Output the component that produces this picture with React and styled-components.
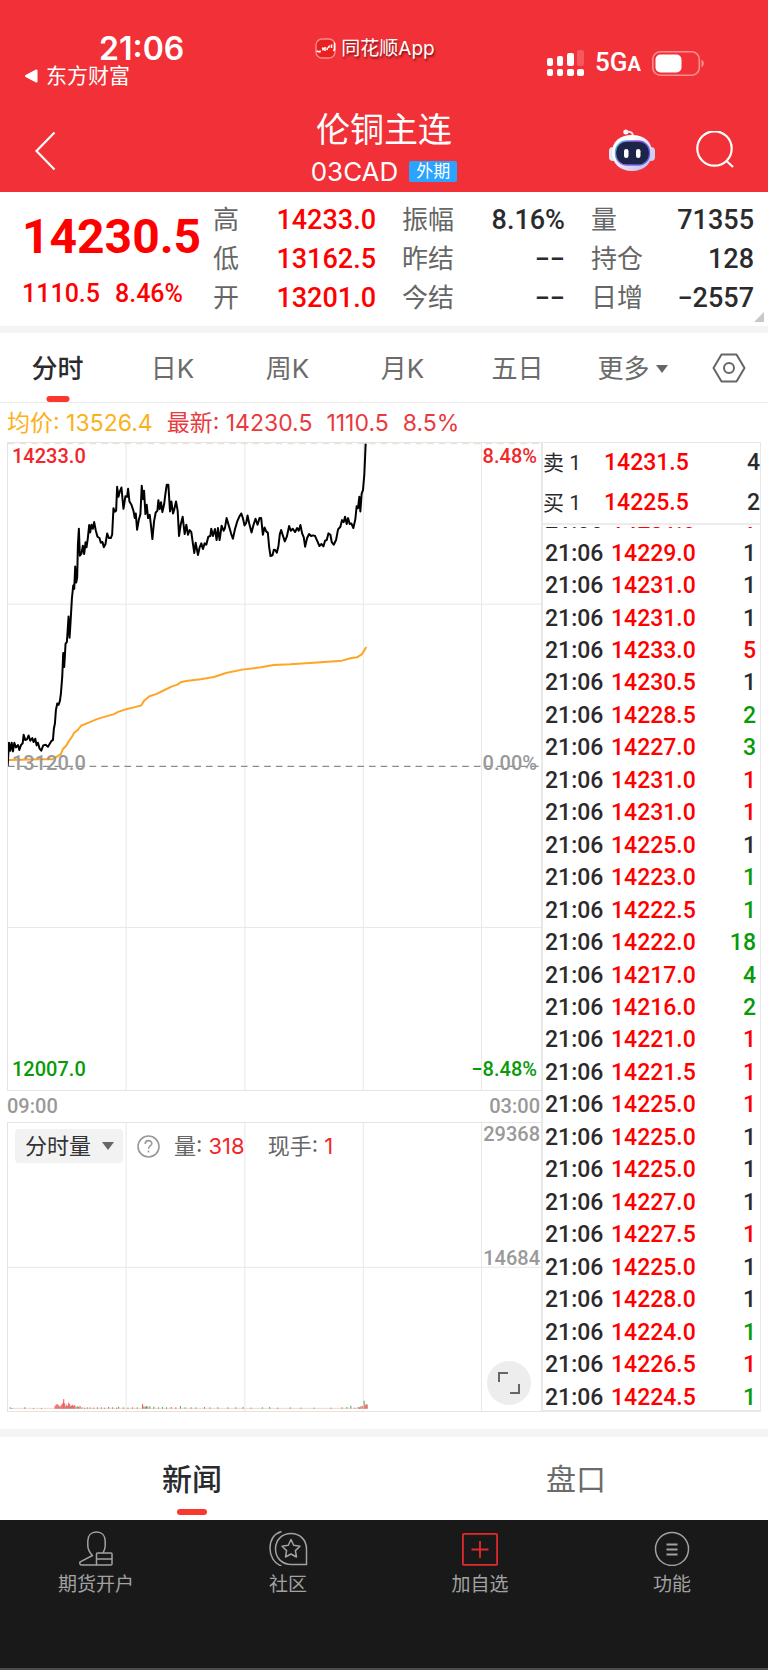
import styled, {createGlobalStyle, css} from 'styled-components'

const UP = '#ff0000'
const DOWN = '#089a08'
const FLAT = '#2b2b2e'

const sans = `Inter, 'Noto Sans CJK SC', sans-serif`
const numeric = `Roboto, 'Noto Sans CJK SC', sans-serif`

const GlobalStyle = createGlobalStyle`
  * {
    box-sizing: border-box;
  }

  body {
    margin: 0;
    background: #fff;
    color: ${FLAT};
    font-family: ${sans};
  }

  button,
  select {
    margin: 0;
    padding: 0;
    border: 0;
    background: none;
    color: inherit;
    font: inherit;
  }

  svg {
    display: block;
    flex: none;
  }
`

const Header = styled.header`
  background: #f13037;
  color: #fff;
`

const StatusBar = styled.div`
  display: grid;
  grid-template-columns: 1fr auto 1fr;
  align-items: start;
  height: 95px;
  padding: 31px 42px 0 24px;
`

const Clock = styled.div`
  padding-left: 75px;
  font-size: 32px;
  font-weight: 600;
  line-height: 35px;
`

const ReturnLink = styled.a`
  display: flex;
  align-items: center;
  gap: 8px;
  color: inherit;
  font-size: 21px;
  line-height: 20px;
  text-decoration: none;
`

const SourceApp = styled.div`
  display: flex;
  align-items: center;
  gap: 5px;
  font-size: 19px;
  line-height: 35px;
  text-shadow: 1px 2px 2px rgba(60, 0, 0, 0.6);
`

const StatusIcons = styled.div`
  display: flex;
  justify-content: flex-end;
  align-items: center;
  gap: 11px;
  height: 24px;
  margin-top: 20px;
  padding-right: 22px;
`

const Network = styled.span`
  font-family: ${numeric};
  font-size: 26px;
  font-weight: 500;
  line-height: 24px;

  small {
    font-size: 20px;
    font-weight: 700;
  }
`

const TitleBar = styled.div`
  display: grid;
  grid-template-columns: 1fr auto 1fr;
  align-items: center;
  padding: 14px 34px 0;
`

const IconButton = styled.button`
  display: block;
  justify-self: start;
`

const Heading = styled.div`
  text-align: center;
`

const Title = styled.h1`
  margin: 0;
  font-size: 34px;
  font-weight: 400;
  line-height: 42px;
`

const Contract = styled.div`
  display: flex;
  justify-content: center;
  align-items: center;
  gap: 11px;
  font-size: 26px;
  line-height: 41px;
`

const Badge = styled.span`
  padding: 0 7px;
  border-radius: 2px;
  background: #2aa4ff;
  font-size: 17px;
  line-height: 21px;
`

const Actions = styled.div`
  display: flex;
  justify-content: flex-end;
  align-items: center;
  gap: 41px;
`

const Quote = styled.section`
  display: flex;
  height: 134px;
  padding: 9px 14px 0 22px;
  position: relative;
  font-family: ${numeric};

  &::after {
    content: '';
    position: absolute;
    right: 4px;
    bottom: 4px;
    border: 5px solid;
    border-color: transparent #c8c8c8 #c8c8c8 transparent;
  }
`

const Last = styled.div`
  flex: none;
  width: 191px;
  color: ${UP};
`

const LastPrice = styled.div`
  font-size: 48px;
  font-weight: 700;
  line-height: 72px;
`

const Change = styled.div`
  display: flex;
  gap: 15px;
  font-size: 25px;
  font-weight: 500;
  line-height: 42px;
`

const Stats = styled.dl`
  display: grid;
  flex: 1;
  grid-template-columns: repeat(3, 1fr);
  column-gap: 26px;
  align-content: start;
  margin: 0;
`

const Stat = styled.div`
  display: flex;
  justify-content: space-between;
  line-height: 39px;

  dt {
    color: #666;
    font-size: 26px;
  }

  dd {
    margin: 0;
    color: ${(props) => props.$color || FLAT};
    font-size: 27px;
    font-weight: 500;
  }
`

const Divider = styled.div`
  height: ${(props) => props.$size}px;
  background: #f4f4f4;
`

const Periods = styled.nav`
  display: flex;
  height: 70px;
  border-bottom: 1px solid #ececec;
`

const activeTab = css`
  color: ${FLAT};
  font-weight: 500;

  &::after {
    content: '';
    position: absolute;
    bottom: 0;
    left: 50%;
    width: ${(props) => props.$bar || 23}px;
    height: 6px;
    border-radius: 3px;
    background: #fb382f;
    transform: translateX(-50%);
  }
`

const Tab = styled.button`
  display: flex;
  flex: 1;
  justify-content: center;
  align-items: center;
  gap: 6px;
  position: relative;
  padding-top: 2px;
  color: #6b6b6b;
  font-size: 26px;
  line-height: 38px;
  ${(props) => props.$active && activeTab}
`

const SettingsButton = styled.button`
  display: flex;
  justify-content: center;
  align-items: center;
  width: 78px;
`

const Legend = styled.div`
  display: flex;
  gap: 14px;
  padding: 2px 7px 0;
  color: #e93a3d;
  font-size: 23px;
  line-height: 37px;
`

const Average = styled.span`
  color: #fbb11b;
`

const Board = styled.main`
  display: flex;
  padding: 0 7px 17px;
`

const Charts = styled.div`
  flex: 1;
  min-width: 0;
`

const Plot = styled.div`
  position: relative;
  height: ${(props) => props.$height}px;
  border: 1px solid #e4e4e4;
  border-right: 0;

  > svg {
    width: 100%;
    height: 100%;
  }
`

const axisSpots = {
  top: 'top: 0;',
  middle: 'top: 50%; transform: translateY(-64%);',
  bottom: 'bottom: 8px;',
  volumeTop: 'top: -2px;',
  volumeMiddle: 'top: 50%; transform: translateY(-84%);',
}

const AxisLabel = styled.span`
  position: absolute;
  ${(props) => axisSpots[props.$spot]}
  ${(props) => (props.$right ? `right: ${props.$flush ? 1 : 4}px;` : 'left: 4px;')}
  color: ${(props) => props.$color || '#999'};
  font-family: ${numeric};
  font-size: 20px;
  font-weight: 500;
  line-height: 26px;
`

const TimeAxis = styled.div`
  display: flex;
  justify-content: space-between;
  padding: 0 1px 0 0;
  color: #999;
  font-family: ${numeric};
  font-size: 20px;
  font-weight: 500;
  line-height: 31px;
`

const VolumeBar = styled.div`
  display: flex;
  align-items: center;
  position: absolute;
  top: 6px;
  left: 7px;
  color: #666;
  font-size: 22px;
  line-height: 34px;

  b {
    color: #f0282b;
    font-weight: 400;
  }
`

const SelectBox = styled.label`
  display: flex;
  align-items: center;
  position: relative;
  margin-right: 14px;

  select {
    width: 108px;
    height: 34px;
    padding: 0 10px;
    border-radius: 4px;
    background: #f2f2f2;
    color: #333;
    appearance: none;
  }

  svg {
    position: absolute;
    right: 9px;
    pointer-events: none;
  }
`

const Reading = styled.span`
  margin-left: ${(props) => props.$gap}px;
`

const ExpandButton = styled.button`
  display: flex;
  justify-content: center;
  align-items: center;
  position: absolute;
  right: 10px;
  bottom: 6px;
  width: 44px;
  height: 44px;
  border-radius: 50%;
  background: #ededed;
`

const Depth = styled.aside`
  display: flex;
  flex: none;
  flex-direction: column;
  width: 220px;
  border: 1px solid #e8e8e8;
  border-width: 1px 1px 2px 2px;
  font-family: ${numeric};
`

const Book = styled.table`
  width: 100%;
  border-bottom: 2px solid #ececec;
  border-collapse: collapse;
  line-height: 40px;

  th,
  td {
    padding: 0;
    font-size: 23px;
    font-weight: 500;
    text-align: left;
  }

  th {
    width: 61px;
    font-size: 21px;
    font-weight: 400;
  }

  td:nth-child(2) {
    color: ${UP};
  }

  td:last-child {
    text-align: right;
  }
`

const Tape = styled.div`
  display: flex;
  flex: 1 1 0px;
  flex-direction: column;
  justify-content: flex-end;
  min-height: 0;
  margin-top: 2px;
  overflow: hidden;
`

const Ticks = styled.table`
  flex: none;
  width: 100%;
  height: 909px;
  margin-bottom: -4px;
  border-collapse: collapse;
  font-size: 23px;
  font-weight: 500;
  line-height: 28px;

  td {
    padding: 0;
  }

  td:first-child {
    width: 68px;
    padding-left: 2px;
  }
`

const TickPrice = styled.td`
  color: ${UP};
`

const TickSize = styled.td`
  && {
    padding-right: 4px;
  }
  color: ${(props) => props.$color};
  text-align: right;
`

const InfoTabs = styled.nav`
  display: flex;
  height: 83px;
  padding-bottom: 5px;

  ${Tab} {
    padding-top: 6px;
    font-size: 30px;
  }
`

const Toolbar = styled.footer`
  display: flex;
  height: 150px;
  padding-top: 10px;
  border-bottom: 2px solid #4c4c4c;
  background: #191919;
`

const Tool = styled.button`
  display: flex;
  flex: 1;
  flex-direction: column;
  align-items: center;
  gap: 3px;
  color: #a2a2a2;
  font-size: 19px;
  line-height: 32px;
`

const stats = [
  ['高', '14233.0', UP],
  ['振幅', '8.16%'],
  ['量', '71355'],
  ['低', '13162.5', UP],
  ['昨结', '−−'],
  ['持仓', '128'],
  ['开', '13201.0', UP],
  ['今结', '−−'],
  ['日增', '−2557'],
]

const ticks = [
  ['14231.0', 1, UP],
  ['14229.0', 1],
  ['14231.0', 1],
  ['14231.0', 1],
  ['14233.0', 5, UP],
  ['14230.5', 1],
  ['14228.5', 2, DOWN],
  ['14227.0', 3, DOWN],
  ['14231.0', 1, UP],
  ['14231.0', 1, UP],
  ['14225.0', 1],
  ['14223.0', 1, DOWN],
  ['14222.5', 1, DOWN],
  ['14222.0', 18, DOWN],
  ['14217.0', 4, DOWN],
  ['14216.0', 2, DOWN],
  ['14221.0', 1, UP],
  ['14221.5', 1, UP],
  ['14225.0', 1, UP],
  ['14225.0', 1],
  ['14225.0', 1],
  ['14227.0', 1],
  ['14227.5', 1, UP],
  ['14225.0', 1],
  ['14228.0', 1],
  ['14224.0', 1, DOWN],
  ['14226.5', 1, UP],
  ['14224.5', 1, DOWN],
]

const pricePoints =
  '20,1008 24,938 28,962 32,938 36,964 40,938 45,952 51,945 55,960 60,945 65,940 68,914 73,930 78,928 83,916 88,932 94,924 98,936 103,926 107,946 111,938 116,956 121,962 127,946 134,944 141,950 147,940 152,932 156,930 159,895 162,880 165,840 169,820 173,824 177,812 180,790 184,740 187,668 190,710 194,640 198,635 203,558 206,622 209,575 213,505 217,465 220,475 223,408 226,456 229,440 231,345 234,294 237,375 242,368 246,345 250,370 254,335 257,350 261,322 265,283 268,305 272,282 276,294 280,274 285,300 290,318 296,322 300,336 305,334 309,350 314,340 319,308 324,322 330,322 334,312 338,232 342,243 346,240 349,168 353,198 357,182 362,170 368,234 374,196 379,198 382,174 386,212 392,222 398,240 402,262 405,248 409,297 414,268 419,250 423,165 427,205 430,180 434,250 438,222 442,262 447,252 451,287 455,325 460,272 465,245 470,240 473,208 477,235 481,214 485,244 490,222 494,190 498,162 503,162 508,242 512,212 517,248 521,235 526,212 531,240 535,316 540,282 546,258 552,310 557,282 562,312 567,298 572,304 577,340 581,367 585,336 592,373 597,350 602,338 607,355 612,338 617,342 623,318 629,316 632,294 637,316 643,295 648,328 652,292 657,328 663,285 669,300 673,292 678,262 685,286 692,310 697,324 703,296 710,272 716,258 722,248 727,262 732,284 737,276 741,254 746,278 753,305 759,282 765,264 771,282 777,262 782,262 787,312 792,290 797,302 802,306 806,350 810,376 816,374 820,357 824,358 829,366 834,345 838,310 842,298 847,314 853,332 859,318 866,286 871,300 877,294 884,304 890,292 895,300 900,283 905,308 910,320 914,348 920,322 926,310 932,316 938,314 944,316 951,332 957,346 963,340 969,347 974,330 979,328 984,308 990,312 994,334 1000,342 1007,328 1013,296 1020,288 1025,268 1030,274 1034,258 1039,280 1043,262 1048,280 1053,278 1059,292 1065,265 1069,226 1073,232 1077,198 1080,242 1084,188 1088,178 1092,130 1094,85 1096,38'

const averagePoints =
  '20,990 60,989 110,988 155,988 168,980 180,972 186,957 196,947 204,933 212,922 220,908 230,900 242,886 262,878 288,867 318,858 340,852 350,846 376,837 405,830 421,826 430,812 446,798 468,791 490,780 512,769 530,763 540,756 556,752 600,747 640,740 676,728 725,718 780,711 820,704 870,702 940,697 1025,691 1050,684 1070,681 1084,672 1092,660 1098,650'

// [x, height, direction]
const volumeBars = [
  [26, 4, 1], [32, 2, 0], [70, 4, 1], [96, 2, 0], [120, 2, 1],
  [161, 8, 1], [164, 12, 1], [167, 14, 1], [170, 12, 1], [173, 8, 1],
  [176, 7, 0], [179, 10, 1], [182, 14, 1], [185, 18, 1], [187, 29, 1],
  [190, 16, 1], [193, 7, 0], [196, 12, 1], [199, 8, 1], [202, 18, 1],
  [205, 14, 1], [208, 8, 0], [211, 10, 1], [214, 12, 1], [217, 8, 1],
  [220, 11, 1], [224, 6, 0], [228, 7, 0], [232, 6, 1], [236, 8, 1],
  [242, 4, 1], [250, 3, 0], [258, 4, 0], [266, 4, 1], [276, 3, 1],
  [288, 4, 0], [300, 4, 1], [310, 3, 0], [322, 5, 1], [334, 4, 1],
  [346, 3, 0], [352, 6, 0], [366, 4, 1], [380, 3, 0], [394, 4, 1],
  [408, 4, 0], [424, 14, 1], [428, 7, 0], [432, 6, 0], [436, 8, 1],
  [440, 6, 0], [446, 7, 0], [458, 6, 0], [472, 4, 1], [484, 5, 0],
  [496, 4, 0], [510, 5, 1], [524, 4, 1], [538, 8, 0], [552, 4, 0],
  [570, 4, 1], [584, 4, 0], [610, 5, 1], [626, 4, 0], [650, 4, 1],
  [680, 4, 0], [704, 4, 1], [726, 5, 0], [750, 3, 1], [784, 4, 0],
  [806, 5, 0], [830, 3, 1], [868, 4, 0], [900, 3, 1], [940, 3, 0],
  [990, 3, 1], [1024, 4, 1], [1038, 5, 0], [1050, 9, 0], [1062, 3, 1],
  [1072, 5, 1], [1076, 4, 0], [1080, 7, 1], [1084, 8, 1], [1090, 24, 0],
  [1093, 10, 1], [1096, 14, 1], [1099, 12, 1],
]

const gridColumns = [376, 733, 1089, 1444]

const Caret = ({width = 12, height = 8}) => (
  <svg width={width} height={height} viewBox="0 0 12 8">
    <path d="M0 0h12L6 8z" fill="#666" />
  </svg>
)

const GridLines = ({top, height, rows}) => (
  <g stroke="#e8e8e8" strokeWidth="3">
    {gridColumns.map((x) => (
      <path key={x} d={`M${x} ${top}v${height}`} />
    ))}
    {rows.map((y) => (
      <path key={y} d={`M21 ${y}h1602`} />
    ))}
  </g>
)

const PriceChart = () => (
  <svg viewBox="21 36 1602 1947" preserveAspectRatio="none">
    <GridLines top={36} height={1947} rows={[521, 1494]} />
    <path d="M21 38h1602" stroke="#ecdcc4" strokeWidth="3" strokeDasharray="20 15" />
    <path d="M21 1009h1602" stroke="#8c8c8c" strokeWidth="4" strokeDasharray="20 15" />
    <g fill="none" strokeLinejoin="round">
      <polyline points={averagePoints} stroke="#ffa526" strokeWidth="6" />
      <polyline points={pricePoints} stroke="#000" strokeWidth="6" />
    </g>
  </svg>
)

const VolumeChart = () => (
  <svg viewBox="21 246 1602 870" preserveAspectRatio="none">
    <GridLines top={246} height={870} rows={[682]} />
    <path d="M25 1108h1076" stroke="#ecd9cd" strokeWidth="3" />
    {volumeBars.map(([x, height, up]) => (
      <rect
        key={x}
        x={x}
        y={1109 - height}
        width="3"
        height={height}
        fill={up ? '#f04c4c' : '#55a455'}
      />
    ))}
  </svg>
)

const AppLogo = () => (
  <svg width="21" height="21" viewBox="0 0 21 21" fill="none">
    <rect x="1" y="1" width="19" height="19" rx="6" fill="#e8201f" stroke="#f98a8c" strokeWidth="1.4" />
    <path
      d="M1.5 13l3 1M5 12.5v2M7 10l1.5.5-1 2M10 9v4M12.5 9.5l-.5 2.5M14.5 7.5l-1 2.5M16.500 6.500v3.500M19.500 4.500v7l-1 1.500"
      stroke="#fff"
      strokeWidth="1.6"
    />
  </svg>
)

const Signal = () => (
  <svg width="37" height="26" viewBox="0 0 37 26" fill="#fff">
    <rect x="0" y="8" width="6" height="8" rx="2" />
    <rect x="10" y="6" width="6" height="10" rx="2" />
    <rect x="20" y="3" width="7" height="13" rx="2" />
    <rect x="30" y="0" width="7" height="16" rx="2" opacity="0.2" />
    <rect x="0" y="19" width="6" height="7" rx="2" />
    <rect x="10" y="19" width="6" height="7" rx="2" />
    <rect x="20" y="19" width="7" height="7" rx="2" />
    <rect x="30" y="19" width="7" height="7" rx="2" />
  </svg>
)

const Battery = () => (
  <svg width="52" height="25" viewBox="0 0 52 25">
    <rect x="0.8" y="0.8" width="46.5" height="23.4" rx="7.5" fill="none" stroke="#f98f92" strokeWidth="1.6" />
    <rect x="3.5" y="3.5" width="26" height="18" rx="5" fill="#fff" />
    <path d="M49.5 8.500c3 1.500 3 6.500 0 8z" fill="#f98f92" />
  </svg>
)

const Robot = () => (
  <svg width="46" height="43" viewBox="0 0 46 43">
    <defs>
      <linearGradient id="shell" x1="0" y1="0" x2="1" y2="1">
        <stop offset="0.3" stopColor="#fff" />
        <stop offset="1" stopColor="#b9b4e6" />
      </linearGradient>
      <linearGradient id="rim" x1="0" y1="0" x2="1" y2="0.4">
        <stop offset="0" stopColor="#49c8e8" />
        <stop offset="0.5" stopColor="#9a58ee" />
        <stop offset="1" stopColor="#5b62e8" />
      </linearGradient>
    </defs>
    <path d="M17 3.500c3-1.500 7-1 7 4" fill="none" stroke="#e9e6f7" strokeWidth="2" />
    <circle cx="16.8" cy="3" r="2.5" fill="#f5f3fc" />
    <rect x="0" y="18" width="8" height="14" rx="4" fill="#e6e6f6" />
    <rect x="38" y="18" width="8" height="14" rx="4" fill="#cfcdf0" />
    <path d="M23 6c12.500 0 20 7 20 17.500S35.500 42 23 42 3 34 3 23.500 10.500 6 23 6z" fill="url(#shell)" />
    <rect x="6.5" y="12" width="34" height="24" rx="11" fill="#1c2547" stroke="url(#rim)" strokeWidth="1.3" />
    <rect x="15" y="20" width="4.5" height="9" rx="2.2" fill="#fff" />
    <rect x="27" y="20" width="4.5" height="9" rx="2.2" fill="#fff" />
  </svg>
)

const tools = [
  {
    label: '期货开户',
    icon: (
      <svg width="34" height="36" viewBox="0 0 34 36" fill="none" stroke="#a2a2a2" strokeWidth="1.5" strokeLinejoin="round">
        <path d="M18 35H2.500C.5 35 .5 32.500 1.200 31.800L13.500 25.500C10.500 22.500 8.800 20 8.800 15.500V11c0-5.500 3.400-9 8.700-9s8.700 3.500 8.700 9v4.500c0 3-1 5.500-2.200 7.500" />
        <rect x="17.5" y="23" width="15.5" height="12" rx="1" />
        <path d="M17.500 29H33" />
      </svg>
    ),
  },
  {
    label: '社区',
    icon: (
      <svg width="40" height="36" viewBox="0 0 40 36" fill="none" stroke="#a2a2a2" strokeWidth="1.5">
        <path d="M13.500 1.500C5.500 4 2 11 2 18.500S6 33.500 13.500 36" />
        <path d="M38.500 34.500H23.500c-9.500 0-16-6.500-16-15.500s6.500-15.500 15.500-15.500 15.500 6.500 15.500 15.500z" />
        <path
          d="M23 9.500l2.700 5.800 6.300.9-4.600 4.400 1.100 6.400-5.500-3-5.500 3 1.100-6.400-4.600-4.400 6.300-.9z"
          strokeLinejoin="round"
        />
      </svg>
    ),
  },
  {
    label: '加自选',
    icon: (
      <svg width="36" height="36" viewBox="0 0 36 36" fill="none" stroke="#e02a2d" strokeWidth="1.8">
        <rect x="0.9" y="3.9" width="34.2" height="31" rx="1" />
        <path d="M18 11v17M9.500 19.500h17" />
      </svg>
    ),
  },
  {
    label: '功能',
    icon: (
      <svg width="36" height="36" viewBox="0 0 36 36" fill="none" stroke="#a2a2a2">
        <circle cx="18" cy="19" r="16.5" strokeWidth="1.5" />
        <path d="M12.500 14.500h11M12.500 19.500h11M12.500 24.500h11" strokeWidth="2" />
      </svg>
    ),
  },
]

export default function App() {
  return (
    <>
      <GlobalStyle />

      <Header>
        <StatusBar>
          <div>
            <Clock>21:06</Clock>
            <ReturnLink href="#back">
              <svg width="14" height="14" viewBox="0 0 14 14">
                <path d="M12.500 1.500v11L2 7z" fill="#fff" stroke="#fff" strokeWidth="2" strokeLinejoin="round" />
              </svg>
              东方财富
            </ReturnLink>
          </div>
          <SourceApp>
            <AppLogo />
            <span>同花顺App</span>
          </SourceApp>
          <StatusIcons>
            <Signal />
            <Network>
              5G<small>A</small>
            </Network>
            <Battery />
          </StatusIcons>
        </StatusBar>

        <TitleBar>
          <IconButton aria-label="返回">
            <svg width="22" height="40" viewBox="0 0 22 40" fill="none">
              <path d="M20.500 1.500L2.500 20l18 18.500" stroke="#fff" strokeWidth="2.2" />
            </svg>
          </IconButton>
          <Heading>
            <Title>伦铜主连</Title>
            <Contract>
              03CAD
              <Badge>外期</Badge>
            </Contract>
          </Heading>
          <Actions>
            <IconButton aria-label="助手">
              <Robot />
            </IconButton>
            <IconButton aria-label="搜索">
              <svg width="38" height="39" viewBox="0 0 38 39" fill="none" stroke="#fff" strokeWidth="2.2">
                <circle cx="18.5" cy="17.5" r="17.2" />
                <path d="M30.500 30l6.500 6" />
              </svg>
            </IconButton>
          </Actions>
        </TitleBar>
      </Header>

      <Quote>
        <Last>
          <LastPrice>14230.5</LastPrice>
          <Change>
            <span>1110.5</span>
            <span>8.46%</span>
          </Change>
        </Last>
        <Stats>
          {stats.map(([label, value, color]) => (
            <Stat key={label} $color={color}>
              <dt>{label}</dt>
              <dd>{value}</dd>
            </Stat>
          ))}
        </Stats>
      </Quote>

      <Divider $size={7} />

      <Periods>
        <Tab $active>分时</Tab>
        <Tab>日K</Tab>
        <Tab>周K</Tab>
        <Tab>月K</Tab>
        <Tab>五日</Tab>
        <Tab>
          更多
          <Caret />
        </Tab>
        <SettingsButton aria-label="设置">
          <svg width="34" height="30" viewBox="0 0 34 30" fill="none" stroke="#666" strokeWidth="2" strokeLinejoin="round">
            <path d="M9.500 1.500h15L32.500 15l-8 13.500h-15L1.500 15z" />
            <circle cx="17" cy="15" r="5" />
          </svg>
        </SettingsButton>
      </Periods>

      <Legend>
        <Average>均价: 13526.4</Average>
        <span>最新: 14230.5</span>
        <span>1110.5</span>
        <span>8.5%</span>
      </Legend>

      <Board>
        <Charts>
          <Plot $height={649}>
            <PriceChart />
            <AxisLabel $spot="top" $color="#f0282b">14233.0</AxisLabel>
            <AxisLabel $spot="top" $right $color="#f0282b">8.48%</AxisLabel>
            <AxisLabel $spot="middle">13120.0</AxisLabel>
            <AxisLabel $spot="middle" $right>0.00%</AxisLabel>
            <AxisLabel $spot="bottom" $color={DOWN}>12007.0</AxisLabel>
            <AxisLabel $spot="bottom" $right $color={DOWN}>−8.48%</AxisLabel>
          </Plot>

          <TimeAxis>
            <span>09:00</span>
            <span>03:00</span>
          </TimeAxis>

          <Plot $height={290}>
            <VolumeChart />
            <VolumeBar>
              <SelectBox>
                <select aria-label="指标">
                  <option>分时量</option>
                </select>
                <Caret />
              </SelectBox>
              <IconButton aria-label="说明">
                <svg width="23" height="23" viewBox="0 0 23 23" fill="none" stroke="#999" strokeWidth="1.6">
                  <circle cx="11.5" cy="11.5" r="10.5" />
                  <path d="M8.200 9c0-4.500 6.600-4.300 6.600-.5 0 2.500-3.300 2.500-3.300 5.200M11.500 15.500v2" />
                </svg>
              </IconButton>
              <Reading $gap={14}>
                量: <b>318</b>
              </Reading>
              <Reading $gap={23}>
                现手: <b>1</b>
              </Reading>
            </VolumeBar>
            <AxisLabel $spot="volumeTop" $right $flush>29368</AxisLabel>
            <AxisLabel $spot="volumeMiddle" $right $flush>14684</AxisLabel>
            <ExpandButton aria-label="全屏">
              <svg width="24" height="24" viewBox="0 0 24 24" fill="none" stroke="#666" strokeWidth="2">
                <path d="M2 11V2h9M22 13v9h-9" />
              </svg>
            </ExpandButton>
          </Plot>
        </Charts>

        <Depth>
          <Book>
            <tbody>
              <tr>
                <th scope="row">卖 1</th>
                <td>14231.5</td>
                <td>4</td>
              </tr>
              <tr>
                <th scope="row">买 1</th>
                <td>14225.5</td>
                <td>2</td>
              </tr>
            </tbody>
          </Book>
          <Tape>
            <Ticks>
              <tbody>
                {ticks.map(([price, size, color = FLAT], index) => (
                  <tr key={index}>
                    <td>21:06</td>
                    <TickPrice>{price}</TickPrice>
                    <TickSize $color={color}>{size}</TickSize>
                  </tr>
                ))}
              </tbody>
            </Ticks>
          </Tape>
        </Depth>
      </Board>

      <Divider $size={8} />

      <InfoTabs>
        <Tab $active $bar={30}>新闻</Tab>
        <Tab>盘口</Tab>
      </InfoTabs>

      <Toolbar>
        {tools.map(({label, icon}) => (
          <Tool key={label}>
            {icon}
            {label}
          </Tool>
        ))}
      </Toolbar>
    </>
  )
}
